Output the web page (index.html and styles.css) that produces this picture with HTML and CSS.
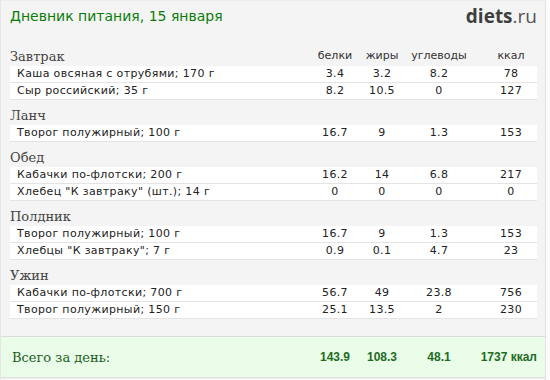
FILE: index.html
```html
<!DOCTYPE html>
<html lang="ru">
<head>
<meta charset="utf-8">
<title>Дневник питания</title>
<link rel="stylesheet" href="styles.css">
</head>
<body>
<div class="page">
  <header class="top">
    <h1 class="title">Дневник питания, 15 января</h1>
    <div class="logo"><span class="logo-b">diets</span>.ru</div>
  </header>

  <section class="meal">
    <div class="meal-head">
      <span class="meal-name">Завтрак</span>
      <span class="lbl">белки</span><span class="lbl">жиры</span><span class="lbl">углеводы</span><span class="lbl kcal">ккал</span>
    </div>
    <div class="row"><span class="name">Каша овсяная с отрубями; 170 г</span><span>3.4</span><span>3.2</span><span>8.2</span><span class="kcal">78</span></div>
    <div class="row"><span class="name">Сыр российский; 35 г</span><span>8.2</span><span>10.5</span><span>0</span><span class="kcal">127</span></div>
  </section>

  <section class="meal">
    <div class="meal-head"><span class="meal-name">Ланч</span></div>
    <div class="row"><span class="name">Творог полужирный; 100 г</span><span>16.7</span><span>9</span><span>1.3</span><span class="kcal">153</span></div>
  </section>

  <section class="meal">
    <div class="meal-head"><span class="meal-name">Обед</span></div>
    <div class="row"><span class="name">Кабачки по-флотски; 200 г</span><span>16.2</span><span>14</span><span>6.8</span><span class="kcal">217</span></div>
    <div class="row"><span class="name">Хлебец "К завтраку" (шт.); 14 г</span><span>0</span><span>0</span><span>0</span><span class="kcal">0</span></div>
  </section>

  <section class="meal">
    <div class="meal-head"><span class="meal-name">Полдник</span></div>
    <div class="row"><span class="name">Творог полужирный; 100 г</span><span>16.7</span><span>9</span><span>1.3</span><span class="kcal">153</span></div>
    <div class="row"><span class="name">Хлебцы "К завтраку"; 7 г</span><span>0.9</span><span>0.1</span><span>4.7</span><span class="kcal">23</span></div>
  </section>

  <section class="meal">
    <div class="meal-head"><span class="meal-name">Ужин</span></div>
    <div class="row"><span class="name">Кабачки по-флотски; 700 г</span><span>56.7</span><span>49</span><span>23.8</span><span class="kcal">756</span></div>
    <div class="row"><span class="name">Творог полужирный; 150 г</span><span>25.1</span><span>13.5</span><span>2</span><span class="kcal">230</span></div>
  </section>

  <div class="total">
    <span class="total-name">Всего за день:</span>
    <span class="tv">143.9</span><span class="tv">108.3</span><span class="tv">48.1</span><span class="tv tk">1737 ккал</span>
  </div>
</div>
</body>
</html>
```

FILE: styles.css
```css
* { box-sizing: border-box; }
html, body { margin: 0; padding: 0; }
body {
  background: #fbfbfb;
  width: 550px;
  height: 380px;
  overflow: hidden;
}
.page {
  width: 546px;
  height: 380px;
  background: #f4f4f4;
  border-left: 1px solid #e6e6e6;
  border-right: 1px solid #e2e2e2;
  border-top: 1px solid #ececec;
  padding: 0 8px 0 9px;
  font-family: "DejaVu Sans", Verdana, sans-serif;
}
.top {
  height: 40px;
  display: flex;
  justify-content: space-between;
  align-items: flex-start;
}
.title {
  margin: 5px 0 0 0;
  font-weight: normal;
  font-size: 14px;
  line-height: 20px;
  color: #0a7d0a;
}
.logo {
  margin-top: 3px;
  font-family: "Open Sans", sans-serif;
  font-size: 19px;
  line-height: 24px;
  color: #555;
}
.logo-b { font-weight: bold; color: #3f3f3f; }

.meal-head, .row, .total {
  display: grid;
  grid-template-columns: 1fr 50px 44px 70px 63px;
}
.meal-head {
  height: 25px;
  align-items: end;
}
.meal-name {
  font-family: "DejaVu Serif", serif;
  font-size: 13px;
  line-height: 17px;
  color: #444;
  padding-bottom: 1px;
}
.lbl {
  font-size: 11px;
  line-height: 14px;
  color: #333;
  text-align: center;
  padding-bottom: 3px;
}
.kcal { padding-left: 11px; }
.row {
  height: 17px;
  background: #fff;
  border-bottom: 1px solid #e4e4e4;
  font-size: 11px;
  line-height: 16px;
  letter-spacing: 0.35px;
  color: #222;
  text-align: center;
}
.row .name { text-align: left; padding-left: 7px; white-space: nowrap; }

.total {
  margin: 17px -8px 0 -9px;
  padding: 0 8px 0 9px;
  height: 42px;
  background: #e9fde9;
  border-top: 1px solid #dcdcdc;
  border-bottom: 1px solid #dcdcdc;
  align-items: center;
}
.total-name {
  font-family: "DejaVu Serif", serif;
  font-size: 13px;
  color: #1c5c1c;
  padding-left: 2px;
}
.tv {
  font-family: "Liberation Sans", Arial, sans-serif;
  font-weight: bold;
  font-size: 12px;
  color: #236b23;
  text-align: center;
}
.tv.tk { text-align: right; padding-left: 0; white-space: nowrap; }
```
